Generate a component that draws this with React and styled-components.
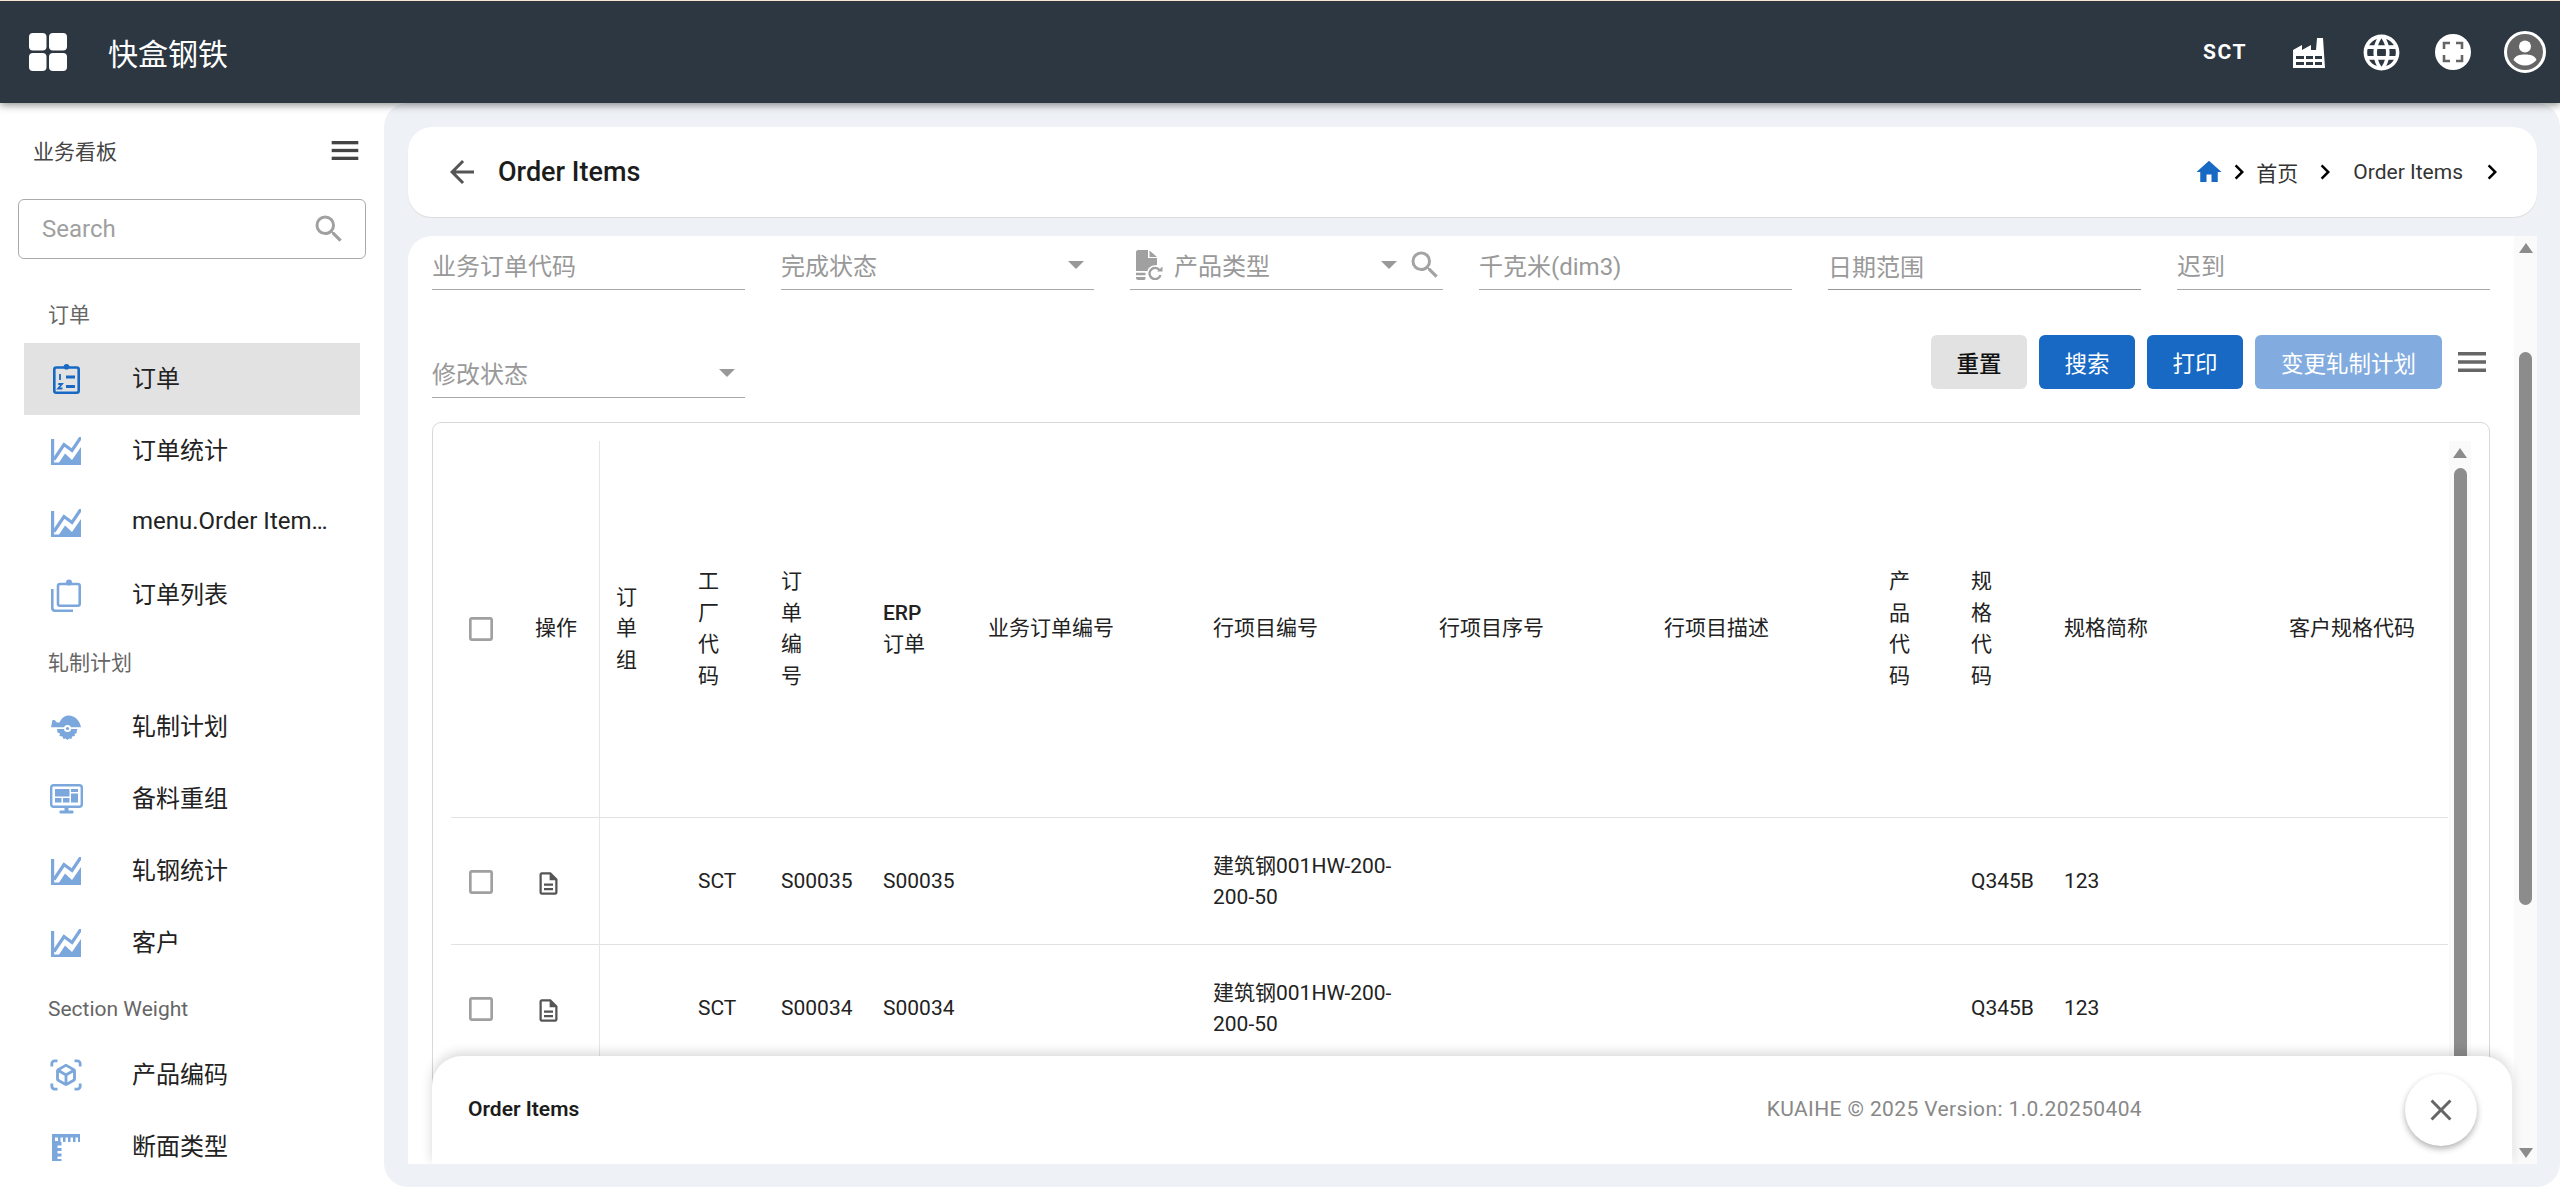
import React from "react";
import styled, { createGlobalStyle } from "styled-components";
import {
  MdArrowBack,
  MdCheckBoxOutlineBlank,
  MdClose,
  MdHome,
  MdLanguage,
  MdNavigateNext,
  MdOutlineDescription,
  MdOutlineViewInAr,
  MdSearch,
} from "react-icons/md";

const GlobalStyle = createGlobalStyle`
  html, body {
    margin: 0;
    padding: 0;
    background: #fff;
  }
  body {
    font-family: Roboto, "Noto Sans CJK SC", sans-serif;
    color: #222;
  }
`;

const Page = styled.div`
  width: 2560px;
  height: 1187px;
  display: flex;
  flex-direction: column;
  overflow: hidden;
  border-top: 1px solid #f7e6d2;
  box-sizing: border-box;
`;

const TopBar = styled.header`
  height: 102px;
  flex: none;
  display: flex;
  align-items: center;
  background: #2d3741;
  box-shadow: 0 2px 8px rgba(0, 0, 0, 0.45);
  position: relative;
  z-index: 2;
  padding-left: 29px;
`;

const BrandTitle = styled.div`
  margin-left: 41px;
  font-size: 30px;
  color: #fff;
`;

const TopRight = styled.div`
  margin-left: auto;
  margin-right: -1px;
  display: flex;
  align-items: center;
  color: #fff;
`;

const PlantCode = styled.div`
  font-size: 21px;
  font-weight: 700;
  letter-spacing: 1.5px;
  margin-right: 26px;
`;

const TopIcon = styled.div`
  width: 72px;
  height: 72px;
  display: flex;
  align-items: center;
  justify-content: center;
`;

const Body = styled.div`
  flex: 1;
  display: flex;
  min-height: 0;
`;

const Sidebar = styled.aside`
  width: 384px;
  flex: none;
  background: #fff;
  overflow: hidden;
`;

const SideHead = styled.div`
  height: 96px;
  box-sizing: border-box;
  padding: 0 25px 2px 33px;
  display: flex;
  align-items: center;
  justify-content: space-between;
  font-size: 21px;
  color: #444;
`;

const SearchBox = styled.div`
  margin: 0 18px 24px;
  height: 60px;
  box-sizing: border-box;
  border: 1px solid #aaa;
  border-radius: 6px;
  display: flex;
  align-items: center;
  justify-content: space-between;
  padding: 0 18px 0 23px;
  font-size: 24px;
  color: #a0a0a0;
`;

const NavLabel = styled.div`
  height: 60px;
  padding-left: 48px;
  display: flex;
  align-items: center;
  font-size: 21px;
  color: #666;
`;

const NavItem = styled.div`
  margin: 0 24px;
  height: 72px;
  display: flex;
  align-items: center;
  padding-left: 25px;
  background: ${(props) => (props.$active ? "#e2e2e2" : "transparent")};
  font-size: 24px;
  color: #222;
`;

const NavIcon = styled.div`
  width: 34px;
  margin-right: 49px;
  flex: none;
  display: flex;
  align-items: center;
  justify-content: center;
  color: ${(props) => (props.$active ? "#1769c4" : "#7ba7dc")};
`;

const NavText = styled.div`
  width: 201px;
  padding-bottom: 5px;
  white-space: nowrap;
  overflow: hidden;
  text-overflow: ellipsis;
`;

const Main = styled.main`
  flex: 1;
  min-width: 0;
  background: #eef1f6;
  border-radius: 24px;
  padding: 24px 23px 23px 24px;
  display: flex;
  flex-direction: column;
  box-sizing: border-box;
`;

const PageHead = styled.div`
  height: 90px;
  flex: none;
  box-sizing: border-box;
  background: #fff;
  border-radius: 24px;
  box-shadow: 0 1px 1px #dcdcdc;
  display: flex;
  align-items: center;
  padding: 0 30px 0 36px;
  color: #555;
`;

const PageTitle = styled.div`
  margin-left: 18px;
  font-size: 27px;
  font-weight: 500;
  color: #1c1c1c;
`;

const Crumbs = styled.div`
  margin-left: auto;
  display: flex;
  align-items: center;
  font-size: 21px;
  color: #333;
`;

const Crumb = styled.span`
  margin-left: ${(props) => (props.$spaced ? "13px" : "2px")};
  margin-right: ${(props) => (props.$spaced ? "14px" : "12px")};
`;

const Content = styled.section`
  flex: 1;
  min-height: 0;
  margin-top: 19px;
  background: #fff;
  border-radius: 24px 0 0 0;
  display: flex;
  position: relative;
  overflow: hidden;
`;

const ContentBody = styled.div`
  flex: 1;
  min-width: 0;
  padding: 0 24px;
  display: flex;
  flex-direction: column;
`;

const FilterGrid = styled.div`
  flex: none;
  display: grid;
  grid-template-columns: repeat(6, 313px);
  grid-auto-rows: 54px;
  column-gap: 36px;
  row-gap: 54px;
`;

const Field = styled.div`
  box-sizing: border-box;
  display: flex;
  align-items: center;
  padding: ${(props) => (props.$dark ? "6px" : "4px")} 10px 0 ${(props) => (props.$icon ? "6px" : "0")};
  border-bottom: 1px solid ${(props) => (props.$dark ? "#979797" : "#a8a8a8")};
  font-size: 24px;
  color: #999;
`;

const FieldText = styled.span`
  margin-left: ${(props) => (props.$icon ? "10px" : "0")};
`;

const Caret = styled.span`
  margin-left: auto;
  width: 0;
  height: 0;
  border-left: 8px solid transparent;
  border-right: 8px solid transparent;
  border-top: 8px solid #999;
`;

const CaretSearch = styled.div`
  margin-left: auto;
  margin-right: -10px;
  display: flex;
  align-items: center;
  gap: 10px;
  color: #a3a3a3;
`;

const Actions = styled.div`
  grid-column: 2 / 7;
  align-self: end;
  height: 54px;
  margin-bottom: 9px;
  padding-right: 4px;
  display: flex;
  align-items: center;
  justify-content: flex-end;
  gap: 12px;
`;

const Button = styled.button`
  width: ${(props) => props.$width}px;
  height: 54px;
  border: 0;
  border-radius: 6px;
  padding: 0;
  font-family: Roboto, "Noto Sans CJK SC", sans-serif;
  font-size: 22.5px;
  font-weight: ${(props) => (props.$variant === "plain" ? 500 : 400)};
  color: ${(props) => (props.$variant === "plain" ? "#111" : "#fff")};
  background: ${(props) =>
    props.$variant === "plain"
      ? "#e2e2e2"
      : props.$variant === "muted"
        ? "#82acdf"
        : "#1769c4"};
`;

const ColumnMenu = styled.div`
  margin-left: 4px;
  display: flex;
`;

const TableBox = styled.div`
  flex: 1;
  min-height: 0;
  margin-top: 24px;
  box-sizing: border-box;
  border: 1px solid #d8d8d8;
  border-radius: 9px;
  padding: 18px 18px 0;
  display: flex;
  gap: 1px;
`;

const TableWrap = styled.div`
  width: 1997px;
  flex: none;
  overflow: hidden;
`;

const Table = styled.table`
  table-layout: fixed;
  width: 2047px;
  border-collapse: separate;
  border-spacing: 0;
`;

const Col = styled.col`
  width: ${(props) => props.$width}px;
`;

const HeadCell = styled.th`
  height: 377px;
  box-sizing: border-box;
  padding: 0 16px;
  border-bottom: 1px solid #e2e2e2;
  border-right: ${(props) => (props.$divider ? "1px solid #e6e6e6" : "0")};
  text-align: left;
  font-size: 21px;
  font-weight: 400;
  line-height: 31.5px;
  color: #222;
`;

const HeadText = styled.span`
  display: block;
  width: ${(props) => (props.$stack ? "21px" : "auto")};
`;

const Latin = styled.span`
  display: block;
  font-weight: 500;
`;

const Cell = styled.td`
  height: 127px;
  box-sizing: border-box;
  padding: 2px 16px 0;
  border-bottom: 1px solid #e2e2e2;
  border-right: ${(props) => (props.$divider ? "1px solid #e6e6e6" : "0")};
  font-size: 21px;
  line-height: 31.5px;
  color: #222;
`;

const CheckCell = styled.div`
  display: flex;
  margin-left: -2px;
  color: #a0a0a0;
`;

const RowIcon = styled.div`
  display: flex;
  padding-top: 3px;
  color: #555;
`;

const ScrollTrack = styled.div`
  width: ${(props) => props.$width}px;
  flex: none;
  box-sizing: border-box;
  background: #fafafa;
  display: flex;
  flex-direction: column;
  align-items: center;
  padding: 7px 0 6px;
`;

const ArrowUp = styled.span`
  width: 0;
  height: 0;
  border-left: 7px solid transparent;
  border-right: 7px solid transparent;
  border-bottom: 10px solid #8c8c8c;
  flex: none;
`;

const ArrowDown = styled.span`
  margin-top: auto;
  width: 0;
  height: 0;
  border-left: 7px solid transparent;
  border-right: 7px solid transparent;
  border-top: 10px solid #8c8c8c;
  flex: none;
`;

const ScrollThumb = styled.div`
  width: 13px;
  flex: none;
  height: ${(props) => props.$height}px;
  margin-top: ${(props) => props.$top}px;
  border-radius: 7px;
  background: #8c8c8c;
`;

const Footer = styled.footer`
  position: absolute;
  left: 24px;
  right: 25px;
  bottom: 0;
  height: 108px;
  box-sizing: border-box;
  padding: 0 35px 0 36px;
  background: #fff;
  border-radius: 30px 30px 0 0;
  box-shadow: 0 -3px 12px rgba(0, 0, 0, 0.16);
  display: flex;
  align-items: center;
`;

const FooterTitle = styled.div`
  font-size: 21px;
  font-weight: 600;
  color: #1c1c1c;
  margin-top: -2px;
`;

const Version = styled.div`
  margin-left: auto;
  margin-right: 263px;
  font-size: 21px;
  letter-spacing: 0.37px;
  color: #888;
  margin-top: -2px;
`;

const CloseFab = styled.div`
  width: 72px;
  height: 72px;
  flex: none;
  border-radius: 50%;
  background: #fff;
  box-shadow: 0 3px 6px rgba(0, 0, 0, 0.3);
  color: #666;
  display: flex;
  align-items: center;
  justify-content: center;
`;

const LogoIcon = () => (
  <svg width="38" height="38" viewBox="0 0 38 38" fill="#fff">
    <rect x="0" y="0" width="17.5" height="17.5" rx="4" />
    <rect x="20" y="0" width="18" height="17.5" rx="4" />
    <rect x="0" y="20" width="17.5" height="18" rx="4" />
    <rect x="20" y="20" width="18" height="18" rx="4" />
  </svg>
);

const FactoryIcon = () => (
  <svg width="32" height="31" viewBox="0 0 32 31" fill="#fff">
    <path
      fillRule="evenodd"
      d="M0 13 L9 8 V13 L18 8 V13 H23 L24 1 H30 L32 31 H0 Z M3 19 H11 V22 H3 Z M13 19 H20 V22 H13 Z M22 19 H29 V22 H22 Z M3 25 H11 V28 H3 Z M13 25 H20 V28 H13 Z M22 25 H29 V28 H22 Z"
    />
  </svg>
);

const FocusIcon = () => (
  <svg width="36" height="36" viewBox="0 0 36 36">
    <circle cx="18" cy="18" r="18" fill="#fff" />
    <path
      d="M9 15 V9 H15 M21 9 H27 V15 M27 21 V27 H21 M15 27 H9 V21"
      fill="none"
      stroke="#666"
      strokeWidth="2.6"
    />
  </svg>
);

const AccountIcon = () => (
  <svg width="42" height="42" viewBox="0 0 42 42">
    <circle cx="21" cy="21" r="19.5" fill="#666" stroke="#fff" strokeWidth="3" />
    <circle cx="21" cy="15.5" r="6" fill="#fff" />
    <path d="M9.5 29 C11 24.5 16 23.5 21 23.5 C26 23.5 31 24.5 32.5 29 C29 33 25 34.5 21 34.5 C17 34.5 13 33 9.5 29 Z" fill="#fff" />
  </svg>
);

const MenuIcon = ({ color, width = 28, height = 20 }) => (
  <svg width={width} height={height} viewBox="0 0 28 20" fill={color}>
    <rect x="0" y="0" width="28" height="3.5" />
    <rect x="0" y="8.25" width="28" height="3.5" />
    <rect x="0" y="16.5" width="28" height="3.5" />
  </svg>
);

const NumberedClipIcon = () => (
  <svg width="27" height="30" viewBox="0 0 27 30" fill="none" stroke="currentColor">
    <rect x="1.3" y="3.5" width="24.4" height="25.2" rx="2" strokeWidth="2.6" />
    <circle cx="13.5" cy="2.8" r="2.8" fill="currentColor" strokeWidth="0" />
    <path d="M7 10 V16 M5.2 20 H9 L5.2 24.5 H9.5" strokeWidth="1.8" />
    <path d="M13 13 H22 M13 22.5 H22" strokeWidth="2.8" />
  </svg>
);

const AreaIcon = () => (
  <svg width="30" height="28" viewBox="0 0 30 28" fill="currentColor">
    <rect x="0" y="2" width="3.2" height="26" />
    <path d="M6.5 28 L14 16.5 L21 23 L30 10 V28 Z" />
    <path d="M3 22.5 L13 7.5 L21 13.5 L30 0" fill="none" stroke="currentColor" strokeWidth="3.2" />
    <rect x="0" y="25.5" width="30" height="2.5" />
  </svg>
);

const ClipListIcon = () => (
  <svg width="30" height="33" viewBox="0 0 30 33" fill="none" stroke="currentColor" strokeWidth="2.6">
    <rect x="7" y="5" width="21.7" height="21.7" rx="2" />
    <circle cx="18" cy="3.5" r="3" fill="currentColor" strokeWidth="0" />
    <path d="M1.3 10 V29 C1.3 30.5 2.3 31.7 4 31.7 H22" />
  </svg>
);

const SawIcon = () => (
  <svg width="30" height="25" viewBox="0 0 30 25">
    <path
      fill="currentColor"
      d="M0 12.5 L1.5 5 L3.5 5 L6 7.5 L8.5 7.5 C10.5 3 14 0.5 17.5 0.5 C24 0.5 29 5.5 30 12.5 Z"
    />
    <path
      fill="currentColor"
      d="M6 14 H26.5 L25.5 17 L26 18 L23.5 19 L24 21 L21 21.5 L20.5 24 L18 23.5 L16.5 25 L14.5 23.5 L12.5 24 L11.5 21.5 L8.5 21 L9 18.5 L6.5 17.5 Z"
    />
    <rect x="0" y="12.5" width="30" height="1.5" fill="#fff" />
    <circle cx="16.5" cy="13.5" r="3.6" fill="#fff" />
    <circle cx="16.5" cy="13.5" r="1.6" fill="currentColor" />
  </svg>
);

const MonitorIcon = () => (
  <svg width="33" height="30" viewBox="0 0 33 30" fill="currentColor">
    <rect x="1.2" y="1.2" width="30.6" height="21.6" rx="2.5" fill="none" stroke="currentColor" strokeWidth="2.4" />
    <rect x="5" y="5" width="14.5" height="7.5" />
    <rect x="21" y="5" width="7" height="3" />
    <rect x="21" y="9.5" width="7" height="9" />
    <rect x="5" y="14" width="6.5" height="4.5" />
    <rect x="13" y="14" width="6.5" height="4.5" />
    <rect x="14.5" y="23" width="4" height="4" />
    <rect x="9.5" y="26.5" width="14" height="3" rx="1" />
  </svg>
);

const RulerIcon = () => (
  <svg width="28" height="27" viewBox="0 0 28 27" fill="currentColor">
    <path
      fillRule="evenodd"
      d="M0 0 H28 V8 H26 V3.5 H23.5 V8 H21 V3.5 H18.5 V8 H16 V3.5 H13.5 V8 H11 V3.5 H8.5 V8 H9.5 V27 H0 Z M3 3.5 H6 V7 H3 Z M5.5 11.5 H9.5 V14 H5.5 Z M5.5 17 H9.5 V19.5 H5.5 Z M5.5 22.5 H9.5 V25 H5.5 Z"
    />
  </svg>
);

const DocRefreshIcon = () => (
  <svg width="28" height="30" viewBox="0 0 28 30" fill="#a0a0a0">
    <path d="M0 2 C0 1 1 0 2 0 H12 V8 H21 V15 C15 15 12 18 11.5 21 H0 Z M13.5 0.5 L21 7 H13.5 Z" />
    <path d="M0 22.8 H9.5 V25.3 H0 Z M0 27 H9.5 V28 C9.5 29 9 30 8 30 H2 C1 30 0 29 0 28 Z" />
    <path d="M23.5 20 A5.6 5.6 0 1 0 24.5 25" fill="none" stroke="#a0a0a0" strokeWidth="2.4" />
    <path d="M21 21.5 H26.5 V16.5 Z" />
  </svg>
);

const navGroups = [
  {
    label: "订单",
    items: [
      { text: "订单", icon: <NumberedClipIcon />, active: true },
      { text: "订单统计", icon: <AreaIcon /> },
      { text: "menu.Order Items Statistics", icon: <AreaIcon /> },
      { text: "订单列表", icon: <ClipListIcon /> },
    ],
  },
  {
    label: "轧制计划",
    items: [
      { text: "轧制计划", icon: <SawIcon /> },
      { text: "备料重组", icon: <MonitorIcon /> },
      { text: "轧钢统计", icon: <AreaIcon /> },
      { text: "客户", icon: <AreaIcon /> },
    ],
  },
  {
    label: "Section Weight",
    items: [
      { text: "产品编码", icon: <MdOutlineViewInAr size={36} /> },
      { text: "断面类型", icon: <RulerIcon /> },
    ],
  },
];

const columns = [
  { width: 68 },
  { width: 81, title: "操作", divider: true },
  { width: 82, title: "订单组", stack: true },
  { width: 83, title: "工厂代码", stack: true },
  { width: 102, title: "订单编号", stack: true },
  { width: 105, title: "订单", latin: "ERP" },
  { width: 225, title: "业务订单编号" },
  { width: 226, title: "行项目编号" },
  { width: 225, title: "行项目序号" },
  { width: 225, title: "行项目描述" },
  { width: 82, title: "产品代码", stack: true },
  { width: 93, title: "规格代码", stack: true },
  { width: 225, title: "规格简称" },
  { width: 225, title: "客户规格代码" },
];

const rows = [
  { order: "S00035", line: "建筑钢001HW-200-200-50" },
  { order: "S00034", line: "建筑钢001HW-200-200-50" },
];

const App = () => {
  return (
    <Page>
      <GlobalStyle />
      <TopBar>
        <LogoIcon />
        <BrandTitle>快盒钢铁</BrandTitle>
        <TopRight>
          <PlantCode>SCT</PlantCode>
          <TopIcon>
            <FactoryIcon />
          </TopIcon>
          <TopIcon>
            <MdLanguage size={43} />
          </TopIcon>
          <TopIcon>
            <FocusIcon />
          </TopIcon>
          <TopIcon>
            <AccountIcon />
          </TopIcon>
        </TopRight>
      </TopBar>
      <Body>
        <Sidebar>
          <SideHead>
            业务看板
            <MenuIcon color="#444" height={19} />
          </SideHead>
          <SearchBox>
            <span>Search</span>
            <MdSearch size={36} />
          </SearchBox>
          {navGroups.map((group) => (
            <React.Fragment key={group.label}>
              <NavLabel>{group.label}</NavLabel>
              {group.items.map((item) => (
                <NavItem key={item.text} $active={item.active}>
                  <NavIcon $active={item.active}>{item.icon}</NavIcon>
                  <NavText>{item.text}</NavText>
                </NavItem>
              ))}
            </React.Fragment>
          ))}
        </Sidebar>
        <Main>
          <PageHead>
            <MdArrowBack size={36} />
            <PageTitle>Order Items</PageTitle>
            <Crumbs>
              <MdHome size={30} color="#1769c4" />
              <MdNavigateNext size={30} color="#000" />
              <Crumb>首页</Crumb>
              <MdNavigateNext size={30} color="#000" />
              <Crumb $spaced>Order Items</Crumb>
              <MdNavigateNext size={30} color="#000" />
            </Crumbs>
          </PageHead>
          <Content>
            <ContentBody>
              <FilterGrid>
                <Field>业务订单代码</Field>
                <Field>
                  完成状态
                  <Caret />
                </Field>
                <Field $icon>
                  <DocRefreshIcon />
                  <FieldText $icon>产品类型</FieldText>
                  <CaretSearch>
                    <Caret />
                    <MdSearch size={36} />
                  </CaretSearch>
                </Field>
                <Field>千克米(dim3)</Field>
                <Field $dark>日期范围</Field>
                <Field>迟到</Field>
                <Field>
                  修改状态
                  <Caret />
                </Field>
                <Actions>
                  <Button $width={96} $variant="plain">
                    重置
                  </Button>
                  <Button $width={96}>搜索</Button>
                  <Button $width={96}>打印</Button>
                  <Button $width={187} $variant="muted">
                    变更轧制计划
                  </Button>
                  <ColumnMenu>
                    <MenuIcon color="#666" />
                  </ColumnMenu>
                </Actions>
              </FilterGrid>
              <TableBox>
                <TableWrap>
                  <Table>
                    <colgroup>
                      {columns.map((col, index) => (
                        <Col key={index} $width={col.width} />
                      ))}
                    </colgroup>
                    <thead>
                      <tr>
                        {columns.map((col, index) => (
                          <HeadCell key={index} $divider={col.divider}>
                            {index === 0 ? (
                              <CheckCell>
                                <MdCheckBoxOutlineBlank size={32} />
                              </CheckCell>
                            ) : (
                              <HeadText $stack={col.stack}>
                                {col.latin && <Latin>{col.latin}</Latin>}
                                {col.title}
                              </HeadText>
                            )}
                          </HeadCell>
                        ))}
                      </tr>
                    </thead>
                    <tbody>
                      {rows.map((row) => (
                        <tr key={row.order}>
                          <Cell>
                            <CheckCell>
                              <MdCheckBoxOutlineBlank size={32} />
                            </CheckCell>
                          </Cell>
                          <Cell $divider>
                            <RowIcon>
                              <MdOutlineDescription size={27} />
                            </RowIcon>
                          </Cell>
                          <Cell />
                          <Cell>SCT</Cell>
                          <Cell>{row.order}</Cell>
                          <Cell>{row.order}</Cell>
                          <Cell />
                          <Cell>{row.line}</Cell>
                          <Cell />
                          <Cell />
                          <Cell />
                          <Cell>Q345B</Cell>
                          <Cell>123</Cell>
                          <Cell />
                        </tr>
                      ))}
                    </tbody>
                  </Table>
                </TableWrap>
                <ScrollTrack $width={22}>
                  <ArrowUp />
                  <ScrollThumb $top={10} $height={640} />
                </ScrollTrack>
              </TableBox>
            </ContentBody>
            <ScrollTrack $width={23}>
              <ArrowUp />
              <ScrollThumb $top={99} $height={553} />
              <ArrowDown />
            </ScrollTrack>
            <Footer>
              <FooterTitle>Order Items</FooterTitle>
              <Version>KUAIHE © 2025 Version: 1.0.20250404</Version>
              <CloseFab>
                <MdClose size={36} />
              </CloseFab>
            </Footer>
          </Content>
        </Main>
      </Body>
    </Page>
  );
};

export default App;
